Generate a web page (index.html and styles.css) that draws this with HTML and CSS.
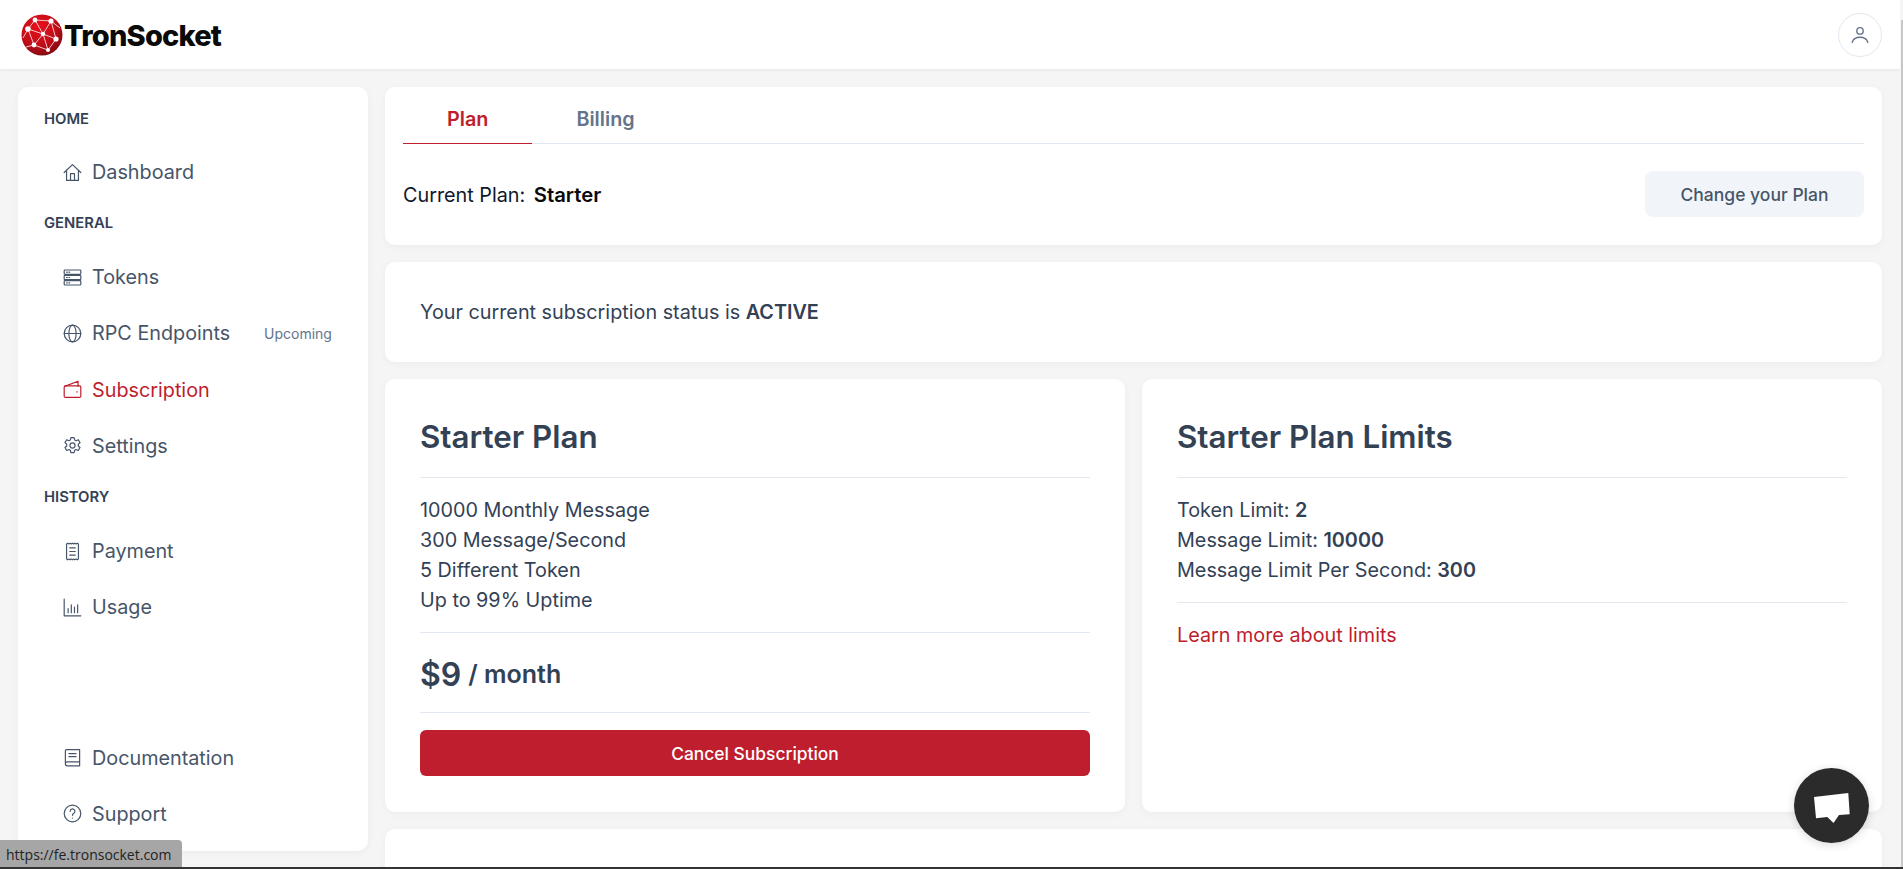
FILE: index.html
```html
<!DOCTYPE html>
<html lang="en">
<head>
<meta charset="utf-8">
<title>TronSocket</title>
<link rel="stylesheet" href="styles.css">
</head>
<body>
<div class="page">
<header class="topbar">
  <a class="logo">
    <svg class="logo-mark" viewBox="0 0 42 42">
      <defs><radialGradient id="lg" cx="40%" cy="30%" r="75%"><stop offset="0" stop-color="#e8101c"/><stop offset=".6" stop-color="#c20d18"/><stop offset="1" stop-color="#7c0a10"/></radialGradient></defs>
      <circle cx="21" cy="21" r="20.5" fill="url(#lg)"/>
      <g stroke="#f4c9cb" stroke-width="1" fill="none">
        <path d="M14 6 30 7 35 25 27 36 13 31 7 15 14 6 22 20 30 7M7 15 22 20 35 25M22 20 13 31M22 20 27 36M2 24 7 15M13 31 5 33M30 7 39 14"/>
      </g>
      <g fill="#fff"><circle cx="14" cy="6" r="2.4"/><circle cx="30" cy="7" r="2.6"/><circle cx="7" cy="15" r="2.8"/><circle cx="22" cy="20" r="2.2"/><circle cx="35" cy="25" r="2.6"/><circle cx="13" cy="31" r="2.4"/><circle cx="27" cy="36" r="2"/></g>
    </svg>
    <span class="logo-text">TronSocket</span>
  </a>
  <button class="avatar">
    <svg viewBox="0 0 24 24" fill="none" stroke="currentColor" stroke-width="1.5" stroke-linecap="round" stroke-linejoin="round"><circle cx="12" cy="7.5" r="3.5"/><path d="M3.5 20c1-3.6 4.4-5.5 8.500-5.500s7.500 1.900 8.500 5.500"/></svg>
  </button>
</header>
<div class="layout">
  <aside class="sidebar">
    <nav class="nav-top">
      <div class="nav-title first">HOME</div>
      <a class="nav-item"><svg class="ico" viewBox="0 0 24 24"><path d="M1.500 12 12 2 22.500 12M4.500 9.500V22h15V9.500M9.500 22v-8.500h5V22"/></svg>Dashboard</a>
      <div class="nav-title">GENERAL</div>
      <a class="nav-item"><svg class="ico" viewBox="0 0 24 24"><rect x="1.500" y="2.500" width="21" height="5.500" rx="1"/><rect x="1.500" y="9.250" width="21" height="5.500" rx="1"/><rect x="1.500" y="16" width="21" height="5.500" rx="1"/><path d="M4.500 5.250h1M7.500 5.250h1M4.500 12h1M7.500 12h1M4.500 18.750h1M7.500 18.750h1"/></svg>Tokens</a>
      <a class="nav-item"><svg class="ico" viewBox="0 0 24 24"><circle cx="12" cy="12" r="10.500"/><ellipse cx="12" cy="12" rx="4.600" ry="10.500"/><path d="M1.500 12h21"/></svg>RPC Endpoints<span class="tag">Upcoming</span></a>
      <a class="nav-item active"><svg class="ico" viewBox="0 0 24 24"><path d="M2 8 19 1.500V8"/><rect x="1.500" y="7.500" width="21" height="14.500" rx="1.500"/><path d="M17.500 15h.4"/></svg>Subscription</a>
      <a class="nav-item"><svg class="ico" viewBox="0 0 24 24"><path d="M10 2h4l.7 3 1.900.9 2.700-1.200 2.200 3.700-2.200 2v2.200l2.200 2-2.200 3.700-2.700-1.200-1.900.9-.7 3h-4l-.7-3-1.900-.9-2.700 1.200-2.200-3.700 2.200-2v-2.200l-2.200-2 2.200-3.700 2.700 1.200 1.900-.9z"/><circle cx="12" cy="12" r="3.200"/></svg>Settings</a>
      <div class="nav-title">HISTORY</div>
      <a class="nav-item"><svg class="ico" viewBox="0 0 24 24"><path d="M4.500 2.500 6 1.500l1.500 1 1.500-1 1.500 1 1.500-1 1.500 1 1.500-1 1.500 1 1.500-1 1.500 1v19l-1.500 1-1.500-1-1.500 1-1.500-1-1.500 1-1.500-1-1.500 1-1.500-1-1.500 1-1.500-1zM8.500 7.500h7M8.500 12h7M8.500 16.500h7"/></svg>Payment</a>
      <a class="nav-item"><svg class="ico" viewBox="0 0 24 24"><path d="M1.500 1.500v21h21M6.500 18.500v-5M10.500 18.500v-10M14.500 18.500v-7M18.500 18.500v-10"/></svg>Usage</a>
    </nav>
    <nav class="nav-bottom">
      <a class="nav-item"><svg class="ico" viewBox="0 0 24 24"><path d="M3 19V3.500A1.500 1.500 0 0 1 4.500 2H21v15.500H5.500A2.500 2.500 0 0 0 3 20a2.500 2.500 0 0 0 2.500 2.500H21v-5M7.500 7h9M7.500 11h9"/></svg>Documentation</a>
      <a class="nav-item"><svg class="ico" viewBox="0 0 24 24"><circle cx="12" cy="12" r="10.500"/><path d="M9 9.300a3 3 0 1 1 4.600 2.500c-1 .6-1.600 1.300-1.600 2.500M12 17.700v.1"/></svg>Support</a>
    </nav>
  </aside>
  <main class="content">
    <section class="card plan-card">
      <div class="tabs"><span class="tab active">Plan</span><span class="tab">Billing</span></div>
      <div class="current">
        <div class="current-text">Current Plan: <b>Starter</b></div>
        <button class="btn-soft">Change your Plan</button>
      </div>
    </section>
    <section class="card status-card"><span>Your current subscription status is <b>ACTIVE</b></span></section>
    <div class="two-col">
      <section class="card info-card">
        <h2>Starter Plan</h2>
        <div class="block list">
          <div>10000 Monthly Message</div><div>300 Message/Second</div><div>5 Different Token</div><div>Up to 99% Uptime</div>
        </div>
        <div class="price"><b>$9</b> <span>/ month</span></div>
        <button class="btn-red">Cancel Subscription</button>
      </section>
      <section class="card info-card">
        <h2>Starter Plan Limits</h2>
        <div class="block list">
          <div>Token Limit: <b>2</b></div><div>Message Limit: <b>10000</b></div><div>Message Limit Per Second: <b>300</b></div>
        </div>
        <a class="learn">Learn more about limits</a>
      </section>
    </div>
    <section class="card tail-card"></section>
  </main>
</div>
</div>
<div class="status-tip">https://fe.tronsocket.com</div>
<div class="scroll-thumb"></div>
<button class="chat"><svg viewBox="0 0 36 30"><path d="M0 4 34.300 0 35.700 21.300 25 22 19.500 30 13.300 24 2 25.300z" fill="#fff"/></svg></button>
</body>
</html>
```

FILE: styles.css
```css
* { box-sizing: border-box; }
html, body { margin: 0; height: 100%; overflow: hidden; }
body { background: #f5f5f5; font-family: Inter, "Liberation Sans", sans-serif; color: #334155; font-size: 19.800px; border-bottom: 2px solid #333; }
.page { height: 867px; overflow: hidden; margin-right: 3px; }
.topbar { height: 69px; background: #fff; box-shadow: 0 1px 4px rgba(0,0,0,.06); display: flex; align-items: center; justify-content: space-between; padding: 0 18px 0 21px; position: relative; }
.logo { display: flex; align-items: center; gap: 1px; margin-top: 1px; }
.logo-mark { width: 42px; height: 42px; }
.logo-text { font-family: Inter, sans-serif; font-weight: 800; font-size: 29px; letter-spacing: -.8px; color: #0a0a0a; line-height: 1; }
.avatar { width: 44px; height: 44px; border-radius: 50%; background: #fff; border: 1px solid #e2e8f0; color: #64748b; padding: 10px; display: flex; }
.avatar svg { width: 22px; height: 22px; }
.layout { display: flex; gap: 17px; padding: 18px 18px 0; }
.sidebar { width: 350px; height: 764px; flex: none; background: #fff; border-radius: 10px; box-shadow: 0 2px 8px rgba(0,0,0,.04); padding: 22px 0 0 26px; display: flex; flex-direction: column; justify-content: space-between; }
.nav-title { font-size: 14.800px; font-weight: 600; line-height: 20px; color: #334155; margin-top: 13px; margin-bottom: 16px; }
.nav-title.first { margin-top: 0; margin-bottom: 15px; }
.nav-item { display: flex; align-items: center; height: 56.200px; padding-left: 19px; color: #475569; gap: 10px; font-size: 19.800px; position: relative; }
.nav-item.active { color: #be1e2d; }
.ico { width: 19px; height: 19px; flex: none; fill: none; stroke: currentColor; stroke-width: 1.500; stroke-linecap: round; stroke-linejoin: round; }
.tag { position: absolute; left: 220px; font-size: 14px; color: #64748b; }
.nav-bottom { padding-bottom: 9px; }
.content { flex: 1; min-width: 0; display: flex; flex-direction: column; gap: 17px; }
.card { background: #fff; border-radius: 10px; box-shadow: 0 2px 8px rgba(0,0,0,.04); }
.plan-card { height: 158px; padding: 0 18px; }
.tabs { display: flex; height: 57px; border-bottom: 1px solid #e2e8f0; }
.tab { padding: 7px 44px 0; display: flex; align-items: center; justify-content: center; font-size: 19.800px; font-weight: 600; color: #64748b; margin-bottom: -1px; }
.tab.active { color: #be1e2d; border-bottom: 1px solid #be1e2d; }
.current { display: flex; justify-content: space-between; align-items: center; height: 100px; }
.current-text { color: #0f172a; }
.current-text b { font-weight: 600; font-size: 20.300px; color: #0a0a0a; margin-left: 3px; }
.btn-soft { width: 219px; height: 46px; border: 0; border-radius: 8px; background: #f1f5f9; color: #475569; font: 500 17.500px Inter, sans-serif; }
.status-card { height: 100px; padding: 0 35px; display: flex; align-items: center; }
.status-card b { font-weight: 600; }
.two-col { display: grid; grid-template-columns: 1fr 1fr; gap: 17px; }
.info-card { height: 433px; padding: 0 35px; display: flex; flex-direction: column; }
h2 { margin: 0; height: 99px; padding-top: 18px; line-height: 80px; font-size: 31.300px; font-weight: 600; color: #334155; border-bottom: 1px solid #e2e8f0; flex: none; }
.list { line-height: 30px; padding: 17px 0 17px; border-bottom: 1px solid #e2e8f0; }
.list b { font-weight: 600; }
.price { height: 80px; padding-top: 3px; border-bottom: 1px solid #e2e8f0; display: flex; align-items: center; gap: 7px; color: #334155; }
.price b { font-size: 32px; font-weight: 600; }
.price span { font-size: 25px; font-weight: 600; }
.btn-red { margin-top: 17px; height: 46px; border: 0; border-radius: 6px; background: #be1e2d; color: #fff; font: 500 17.400px Inter, sans-serif; }
.learn { color: #be1e2d; margin-top: 20px; }
.tail-card { height: 60px; flex: none; }
.status-tip { position: fixed; left: 0; bottom: 2px; width: 182px; height: 27px; background: #a6a6a6; border-top-right-radius: 4px; color: #222; font: 14px "Open Sans", sans-serif; padding: 5px 0 0 6px; }
.scroll-thumb { position: fixed; right: 0; top: 20px; width: 2px; bottom: 2px; background: #c8c8c8; }
.chat { position: fixed; left: 1794px; top: 768px; width: 75px; height: 75px; border-radius: 50%; border: 0; background: #2b2b2b; padding: 4px 0 0; box-shadow: 0 2px 10px rgba(0,0,0,.15); display: flex; align-items: center; justify-content: center; }
.chat svg { width: 36px; height: 30px; display: block; }
```
